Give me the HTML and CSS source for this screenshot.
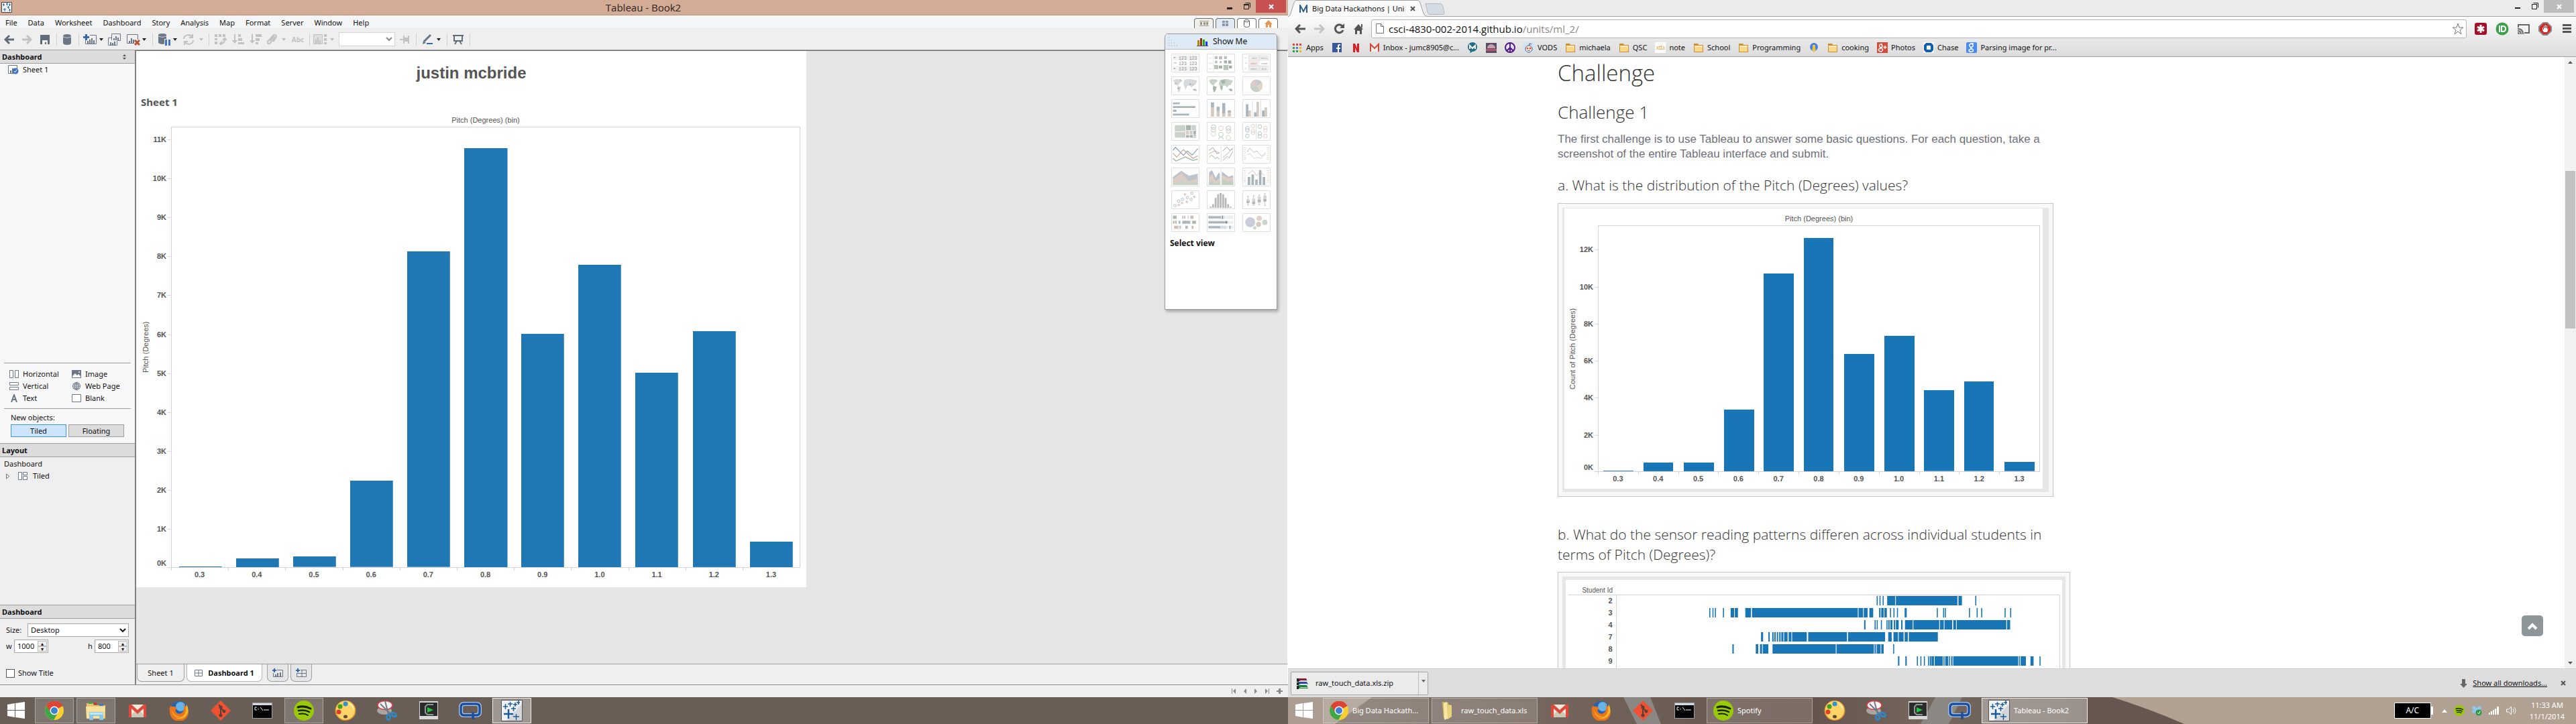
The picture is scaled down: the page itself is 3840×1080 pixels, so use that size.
FILE: index.html
```html
<!DOCTYPE html>
<html lang="en">
<head>
<meta charset="utf-8">
<title>Desktop</title>
<link rel="stylesheet" href="styles.css">
</head>
<body>
<svg class="sprite" aria-hidden="true">
  <symbol id="win" viewBox="0 0 28 28"><path fill="#fff" d="M1 5l11-2v10H1zM13 3l14-2v12H13zM1 14h11v10L1 22zM13 14h14v12l-14-2z"/></symbol>
  <symbol id="chrome" viewBox="0 0 28 28"><circle cx="14" cy="14" r="14" fill="#f7cf31"/><path fill="#dd4433" d="M14 14L2 7a14 14 0 0 1 24.500 0z"/><path fill="#dd4433" d="M14 7h12.100A14 14 0 0 0 1.900 7L8 17z"/><path fill="#3fa648" d="M1.900 7A14 14 0 0 0 13 28l6-10-10-1z"/><circle cx="14" cy="14" r="6.500" fill="#fff"/><circle cx="14" cy="14" r="5" fill="#3d7fd0"/></symbol>
  <symbol id="explorer" viewBox="0 0 32 28"><path fill="#e8c56a" d="M2 3h9l2 3h17v20H2z"/><path fill="#3faa3f" d="M5 1h5v3H5z"/><path fill="#c33" d="M13 2h4v3h-4z"/><path fill="#47c" d="M21 4h6v3h-6z"/><path fill="#f6e29a" d="M1 8h29l-2 18H2z"/><path fill="#8cc6e8" d="M6 16h21v12h-6v-6h-9v6H6z"/><path fill="#c4e6f7" d="M7 17h19v3H7z"/></symbol>
  <symbol id="folder-big" viewBox="0 0 28 28"><path fill="#d9bd5c" d="M6 1l9 1v24l-7-1z"/><path fill="#f7e9a4" d="M8 3l5-2 1 25-5 2z"/><path fill="#e9d27a" d="M14 5l6 1v17l-6 4z"/></symbol>
  <symbol id="gmail" viewBox="0 0 28 28"><path fill="#eee9dc" d="M1 5h26v19H1z"/><path fill="#cfc8b6" d="M1 24l9-9 4 3 4-3 9 9z"/><path fill="#dc4a3d" d="M1 5h4l9 8 9-8h4v19h-4V11l-9 8-9-8v13H1z"/></symbol>
  <symbol id="firefox" viewBox="0 0 30 30"><circle cx="15" cy="15" r="14" fill="#2b62ad"/><circle cx="17" cy="9" r="7" fill="#63b5e6"/><path fill="#e8761c" d="M2 8c2 1 3 1 5 1 3 0 5 2 4 4-2 1-2 3 0 5 3 3 8 2 10-2 3-5 1-8-1-10 6 2 9 7 9 11A14 14 0 0 1 1 17c-1-4 0-7 1-9z"/><path fill="#f8b526" d="M26 6c4 6 3 14-2 18-4 4-10 4-14 2 9 1 15-5 15-12 0-3 0-5 1-8z"/><path fill="#f59b23" d="M4 13c3 8 8 11 15 11-6 4-15 0-15-11z"/></symbol>
  <symbol id="git" viewBox="0 0 32 32"><path fill="#f05133" d="M16 1l15 15-15 15L1 16z"/><g stroke="#5a3f37" stroke-width="2" fill="#5a3f37"><path d="M13 7l3 4v12M16 12l5 5" fill="none"/><circle cx="16" cy="11" r="1.500"/><circle cx="16" cy="23" r="1.500"/><circle cx="21" cy="17" r="1.500"/></g></symbol>
  <symbol id="cmd" viewBox="0 0 30 24"><path fill="#9aa0a8" d="M0 0h30v24H0z"/><path fill="#d4dae2" d="M1 1h28v3H1z"/><path fill="#050505" d="M1 4h28v19H1z"/><path stroke="#eee" fill="none" d="M7 7H4v4h3M9 8v1M9 10v1M12 7l4 5M17 11h8"/></symbol>
  <symbol id="spotify" viewBox="0 0 30 30"><circle cx="15" cy="15" r="15" fill="#9aca05"/><g fill="none" stroke="#17200a" stroke-linecap="round"><path stroke-width="3" d="M6 10c6-2 13-1 19 2"/><path stroke-width="2.500" d="M7 15c6-1 11-1 16 2"/><path stroke-width="2" d="M8 20c5-1 9-1 13 2"/></g></symbol>
  <symbol id="paint" viewBox="0 0 32 32"><ellipse cx="16" cy="16" rx="15.500" ry="15" fill="#e8952a"/><ellipse cx="16" cy="15.500" rx="14" ry="14" fill="#fcd468"/><circle cx="16" cy="6" r="3.500" fill="#2f94cc"/><circle cx="8" cy="10" r="3.500" fill="#3ea31f"/><circle cx="6" cy="18" r="3.500" fill="#e03c2a"/><ellipse cx="16" cy="25" rx="3" ry="2.500" fill="#5d4a3a"/><path fill="#fff0b5" d="M20 4c6 2 9 7 9 12-3-6-6-8-9-12z"/></symbol>
  <symbol id="snip" viewBox="0 0 32 32"><ellipse cx="12" cy="16" rx="11" ry="6" fill="#a9a5a3"/><ellipse cx="13" cy="8" rx="11" ry="6.500" fill="#f4f2f3" stroke="#dc3a44" stroke-width="1.500"/><path stroke="#707880" stroke-width="2" d="M6 6l15 15M13 2l5 19"/><g fill="none" stroke="#2a8cd0" stroke-width="2.500"><ellipse cx="18" cy="26" rx="2.500" ry="4"/><ellipse cx="26" cy="22" rx="4" ry="2.500" transform="rotate(35 26 22)"/></g></symbol>
  <symbol id="ecad" viewBox="0 0 30 28"><path fill="#d8d8d8" d="M1 0h28v27H1z"/><path fill="#2a2c2c" d="M2 2h26v20H2z"/><path fill="none" stroke="#8f9494" stroke-width="2" d="M22 5h-9l-3 3v9l3 3h9"/><path fill="#22c53c" d="M13 9l9 4-9 4z"/></symbol>
  <symbol id="qapp" viewBox="0 0 34 28"><path fill="none" stroke="#a9c6ee" stroke-width="6" d="M8 4h18q5 0 5 5v7q0 5-5 5H8q-5 0-5-5V9q0-5 5-5z"/><path fill="none" stroke="#1d4f9f" stroke-width="3.500" d="M8 4h18q5 0 5 5v7q0 5-5 5H8q-5 0-5-5V9q0-5 5-5zM21 16v11"/></symbol>
  <symbol id="tableau" viewBox="0 0 32 32"><path fill="#eef0f1" stroke="#555" d="M.5.5h31v31H.5z"/><path fill="#d4d7d9" d="M31 6v25H8z"/><g stroke="#1b5c98" stroke-width="1.500"><path d="M3 10h7M6.500 6v8M10 6h7M13.500 3v7M18 7h6M21 4v6M23 4h5M26 1v6M15 13h7M18.500 10v7M18 25h9M22.500 21v9"/><path stroke-width="2.500" d="M4 21h14M11 14v14"/></g></symbol>
  <symbol id="folder" viewBox="0 0 16 16"><path fill="#c98f33" d="M1 2h6l1 2h7v11H1z"/><path fill="#fbd98c" d="M2 5h12v9H2z"/><path fill="#fdeab9" d="M2 5h12v2H2z"/></symbol>
  <symbol id="cyl" viewBox="0 0 12 16"><path fill="#6b7787" d="M0 3q0-3 6-3t6 3v10q0 3-6 3t-6-3z"/><path fill="none" stroke="#c6ccd4" d="M0 4q6 3 12 0"/></symbol>
</svg>
<div class="desktop">

<!-- Left monitor: Tableau -->
<section class="monitor">
  <header class="titlebar">
    <svg class="app-icon" viewBox="0 0 16 16"><path fill="#f4f7f8" stroke="#444" d="M.5.5h15v15H.5z"/><path stroke="#2267b5" d="M2 4h3M3.500 2v4M7 3h3M8.500 1v4M11 4h3M12.500 2v4M3 11h4M5 9v5M9 8h3M10.500 6v4M11 12h3M12.500 10v4"/></svg>
    <h1 class="title">Tableau - Book2</h1>
    <div class="winbtns">
      <button aria-label="Minimize"><svg width="8" height="16"><path fill="#222" d="M0 11h8v3H0z"/></svg></button>
      <button aria-label="Restore"><svg width="10" height="16"><path fill="none" stroke="#222" d="M.5 6.500h7v7h-7zM2.500 4.500h7v7"/><path fill="#222" d="M0 6h8v2H0z"/></svg></button>
      <button class="close close-red" aria-label="Close"><svg width="8" height="8"><path stroke="#fff" stroke-width="2" d="M1 1l6 6M7 1L1 7"/></svg></button>
    </div>
  </header>
  <nav class="menubar">
    <ul class="menu"><li>File</li><li>Data</li><li>Worksheet</li><li>Dashboard</li><li>Story</li><li>Analysis</li><li>Map</li><li>Format</li><li>Server</li><li>Window</li><li>Help</li></ul>
    <div class="viewtabs">
      <button class="vt vt-beige" aria-label="Filmstrip"><svg width="14" height="8"><path fill="#99927c" d="M0 0h14v1H0zM0 7h14v1H0zM1 2h3v4H1zM6 2h3v4H6zM10 2h3v4h-3z"/></svg></button>
      <button class="vt vt-blue" aria-label="Sheets"><svg width="9" height="8"><path fill="#8797ad" d="M0 0h4v3H0zM5 0h4v3H5zM0 4h4v4H0zM5 4h4v4H5z"/></svg></button>
      <button class="vt" aria-label="Data"><svg width="10" height="12"><path fill="none" stroke="#555" d="M.5 2.500q0-2 4-2t4 2v7q0 2-4 2t-4-2zq4 3 8 0"/></svg></button>
      <button class="vt" aria-label="Home"><svg width="12" height="11"><path fill="#e8964f" d="M6 0l6 6h-2v5H7V7H5v4H2V6H0z"/></svg></button>
    </div>
  </nav>
  <div class="toolbar">
    <button aria-label="Back"><svg width="16" height="16"><path fill="none" stroke="#5f6b79" stroke-width="3" d="M15 8H3M8 2L2 8l6 6"/></svg></button>
    <button aria-label="Forward"><svg width="16" height="16"><path fill="none" stroke="#c2c2c2" stroke-width="3" d="M1 8h12M8 2l6 6-6 6"/></svg></button>
    <button aria-label="Save"><svg width="14" height="14"><path fill="#5f6b79" d="M0 0h14v14H0z"/><path fill="#efefef" d="M3 8h8v6H9v-3H7v3H3z"/></svg></button>
    <i class="sep"></i>
    <button aria-label="Connect"><svg width="12" height="16"><use href="#cyl"/></svg></button>
    <i class="sep"></i>
    <button aria-label="New sheet"><svg width="20" height="16"><path fill="none" stroke="#6b7787" d="M10 1.500h9.500v13H3.500V9"/><path stroke="#6b7787" stroke-width="2" d="M7 14v-4M10 14V8M13 14V6M16 14V9"/><path stroke="#3668b0" stroke-width="3" d="M0 4.500h9M4.500 0v9"/></svg></button>
    <b class="caret"></b>
    <button aria-label="Duplicate"><svg width="20" height="18"><path fill="none" stroke="#6b7787" d="M5.500 10V.5h13v10H14M5 6.500H.5v11h13V11"/><path stroke="#6b7787" stroke-width="2" d="M9 10V7M12 10V4M15 10V6M4 17v-4M7 17v-3M10 17v-5"/></svg></button>
    <button aria-label="Clear"><svg width="20" height="18"><path fill="none" stroke="#6b7787" d="M11 14.500H.5v-13h16V9"/><path stroke="#6b7787" stroke-width="2" d="M4 14v-3M7 14V7M10 14V9"/><path stroke="#b95335" stroke-width="3" d="M12 10l7 7M19 10l-7 7"/></svg></button>
    <b class="caret"></b>
    <i class="sep"></i>
    <button aria-label="Pause updates"><svg width="18" height="18"><path fill="#6b7787" d="M0 2q0-2 6-2t6 2v12q-3 2-6 2t-6-2z"/><path stroke="#c6ccd4" fill="none" d="M0 4q6 3 12 0"/><path fill="#efefef" d="M9 8h9v10H9z"/><path fill="#3f74c4" d="M10 9h3v9h-3zM15 9h3v9h-3z"/></svg></button>
    <b class="caret"></b>
    <button aria-label="Refresh"><svg width="16" height="16"><path fill="none" stroke="#c2c2c2" stroke-width="2" d="M1 7a6.500 6 0 0 1 12-3M15 9a6.500 6 0 0 1-12 3M14 0v5H9M2 16v-5h5"/></svg></button>
    <b class="caret off"></b>
    <i class="sep"></i>
    <button aria-label="Swap"><svg width="18" height="16"><path fill="#c2c2c2" d="M0 0h4v4H0zM6 0h4v4H6zM12 0h4v4h-4zM0 6h4v3H0zM0 11h4v4H0z"/><path fill="none" stroke="#c2c2c2" stroke-width="2" d="M9 14q6 0 6-7M12 9l3-3 3 3M11 11l-3 3 3 3"/></svg></button>
    <button aria-label="Sort ascending"><svg width="18" height="16"><path fill="#c2c2c2" d="M9 0h4v4H9zM9 6h6v4H9zM9 12h9v3H9zM3 0h2v9h3l-4 5-4-5h3z"/></svg></button>
    <button aria-label="Sort descending"><svg width="18" height="16"><path fill="#c2c2c2" d="M9 0h9v4H9zM9 6h6v4H9zM9 12h4v3H9zM3 0h2v9h3l-4 5-4-5h3z"/></svg></button>
    <button aria-label="Group"><svg width="16" height="16"><path fill="none" stroke="#c2c2c2" stroke-width="2" d="M5 10l6-6q2 0 1 2l-7 8q-4 1-3-3l7-8q4-4 6 0 0 2-5 8"/></svg></button>
    <b class="caret off"></b>
    <button class="abc">Abc</button>
    <i class="sep"></i>
    <button aria-label="Fit"><svg width="20" height="16"><path fill="#dedede" stroke="#c2c2c2" d="M.5.5h13v14H.5z"/><path fill="#c2c2c2" d="M3 8h2v7H3zM6 5h2v10H6zM9 9h2v6H9zM16 0h4v4h-4zM16 6h4v4h-4zM16 12h4v3h-4z"/></svg></button>
    <b class="caret off"></b>
    <select class="fit" aria-label="View size"><option></option></select>
    <button aria-label="Fix axes"><svg width="16" height="12"><path fill="#c2c2c2" d="M0 5h5v2H0zM5 0h2v12H5zM7 3h5V0h2v12h-2V9H7z"/></svg></button>
    <i class="sep"></i>
    <button aria-label="Highlight"><svg width="16" height="16"><path stroke="#6b7787" stroke-width="3" d="M2 11L12 1"/><path fill="#6b7787" d="M0 15l1-5 4 3z"/><path fill="#3668b0" d="M6 13h9v2H6z"/></svg></button>
    <b class="caret"></b>
    <i class="sep"></i>
    <button aria-label="Presentation"><svg width="16" height="16"><path fill="none" stroke="#5f6b79" stroke-width="2" d="M0 2h16M2 2v8h12V2M6 10l-3 5M10 10l3 5"/></svg></button>
    <i class="sep"></i>
  </div>

  <div class="workspace">
    <aside class="sidebar">
      <h2 class="side-head side-first">Dashboard <svg width="5" height="8"><path fill="#555" d="M0 3l2.500-3L5 3zM0 5h5L2.500 8z"/></svg></h2>
      <div class="sheet-list"><div class="sheet-item"><svg width="16" height="14"><path fill="#fff" stroke="#6b7787" d="M.5.5h13v12H.5z"/><path fill="#6b7787" d="M3 8h2v4H3zM6 5h2v7H6z"/><circle cx="11" cy="9" r="4.500" fill="#3f74c4"/><path fill="none" stroke="#fff" d="M9 9l1.500 2 2.500-4"/></svg>Sheet 1</div></div>
      <div class="objects">
        <ul class="object-grid">
          <li><svg width="14" height="12"><path fill="#fff" stroke="#6b7787" d="M.5.5h5v11h-5zM8.500.5h5v11h-5z"/></svg>Horizontal</li>
          <li><svg width="14" height="12"><path fill="#6b7787" d="M0 0h14v12H0z"/><path fill="#fff" d="M1 9l4-4 3 3 2-2 3 3v2H1z"/><circle cx="11" cy="3" r="1" fill="#fff"/></svg>Image</li>
          <li><svg width="14" height="12"><path fill="#fff" stroke="#6b7787" d="M.5.5h13v4H.5zM.5 7.500h13v4H.5z"/></svg>Vertical</li>
          <li><svg width="14" height="12"><path fill="none" stroke="#6b7787" d="M7 .5a5.500 5.500 0 1 1 0 11 5.500 5.500 0 1 1 0-11zM7 0v12M1 6h12M2 3h10M2 9h10M7 .5q-6 5.500 0 11M7 .5q6 5.500 0 11"/></svg>Web Page</li>
          <li><svg width="14" height="12"><path fill="none" stroke="#6b7787" stroke-width="2" d="M3 12L7 1l4 11M4 8h6"/></svg>Text</li>
          <li><svg width="14" height="12"><path fill="#fff" stroke="#6b7787" d="M.5.5h13v11H.5z"/></svg>Blank</li>
        </ul>
        <p class="newobj">New objects:</p>
        <div class="toggle"><button class="on">Tiled</button><button>Floating</button></div>
      </div>
      <h2 class="side-head">Layout</h2>
      <div class="layout-tree">
        <div>Dashboard</div>
        <div class="tree-row"><svg width="6" height="9"><path fill="none" stroke="#777" d="M.5 1v7L5 4.500z"/></svg><svg width="14" height="12"><path fill="#fff" stroke="#6b7787" d="M.5.5h5v11h-5zM7.500.5h6v4h-6zM7.500 6.500h6v5h-6z"/></svg>Tiled</div>
      </div>
      <h2 class="side-head">Dashboard</h2>
      <form class="size-form">
        <div class="size-row"><label for="size">Size:</label><select id="size"><option>Desktop</option></select></div>
        <div class="size-row dims">
          <label for="w">w</label><span class="spin"><input id="w" value="1000"><span class="steps"><button type="button" aria-label="Wider">▴</button><button type="button" aria-label="Narrower">▾</button></span></span>
          <label class="h" for="h">h</label><span class="spin"><input id="h" value="800"><span class="steps"><button type="button" aria-label="Taller">▴</button><button type="button" aria-label="Shorter">▾</button></span></span>
        </div>
        <label class="check"><input type="checkbox"> Show Title</label>
      </form>
    </aside>

    <div class="main">
      <div class="canvas">
        <article class="dash">
          <h2 class="dash-title">justin mcbride</h2>
          <h3 class="sheet-title">Sheet 1</h3>
          <figure class="chart chart-left">
            <figcaption>Pitch (Degrees) (bin)</figcaption>
            <span class="ytitle">Pitch (Degrees)</span>
            <ol class="yaxis">
              <li style="--v:11000">11K</li><li style="--v:10000">10K</li><li style="--v:9000">9K</li><li style="--v:8000">8K</li><li style="--v:7000">7K</li><li style="--v:6000">6K</li><li style="--v:5000">5K</li><li style="--v:4000">4K</li><li style="--v:3000">3K</li><li style="--v:2000">2K</li><li style="--v:1000">1K</li><li class="zero" style="--v:0">0K</li>
            </ol>
            <div class="plot"><i style="--v:20"></i><i style="--v:225"></i><i style="--v:270"></i><i style="--v:2223"></i><i style="--v:8130"></i><i style="--v:10800"></i><i style="--v:6015"></i><i style="--v:7795"></i><i style="--v:5015"></i><i style="--v:6078"></i><i style="--v:660"></i></div>
            <ol class="xaxis"><li>0.3</li><li>0.4</li><li>0.5</li><li>0.6</li><li>0.7</li><li>0.8</li><li>0.9</li><li>1.0</li><li>1.1</li><li>1.2</li><li>1.3</li></ol>
          </figure>
        </article>
      </div>
      <div class="sheet-tabs">
        <button class="st st-sheet">Sheet 1</button>
        <button class="st st-active"><svg width="12" height="10"><path fill="#fff" stroke="#6b7787" d="M.5.5h11v9H.5zM6 0v10M0 5h12"/></svg>Dashboard 1</button>
        <button class="st st-add" aria-label="New worksheet"><svg width="16" height="13"><path fill="none" stroke="#6b7787" d="M7 2.500h8.500v10H1.500V7"/><path stroke="#6b7787" stroke-width="2" d="M5 12V9M8 12V7M12 12V6"/><path stroke="#3668b0" stroke-width="2" d="M0 3h6M3 0v6"/></svg></button>
        <button class="st st-add" aria-label="New dashboard"><svg width="16" height="13"><path fill="none" stroke="#6b7787" d="M7 2.500h8.500v10H1.500V7M9 2v10M1 7.500h15"/><path stroke="#3668b0" stroke-width="2" d="M0 3h6M3 0v6"/></svg></button>
      </div>
    </div>

    <section class="showme">
      <h2 class="showme-head"><svg class="grip" width="15" height="14"><path stroke="#999" stroke-dasharray="1 3" d="M1 1h1M1 5h5M1 9h9M1 13h14"/></svg><svg width="17" height="13"><path fill="#b8860b" d="M1 4h3v8H1z"/><path fill="#9c2b0c" d="M5 1h3v11H5z"/><path fill="#1fae1f" d="M9 3h3v9H9z"/><path fill="#2233ff" d="M13 6h3v6h-3z"/><path fill="#555" d="M0 12h17v1H0z"/></svg>Show Me</h2>
      <div class="thumbs">
        <svg viewBox="0 0 126 84"><path fill="#f3f3f3" d="M3 3h120v27H3zM3 56h120v25H3z"/><path fill="#aaa" d="M6 13h9v5H6zM6 40h15v4H6zM6 66h9v5H6z"/><g class="mono"><text x="31" y="25">123 123</text><text x="31" y="51">123 123</text><text x="31" y="77">123 123</text></g></svg>
        <svg viewBox="0 0 126 84"><path fill="#ddd" d="M6 15h9v5H6zM6 41h15v4H6zM6 67h9v5H6zM24 3h2v78h-2z"/><path fill="#b7c2ba" d="M33 9h14v14H33zM78 9h14v14H78zM34 31h12v12H34zM57 33h10v10H57zM30 52h20v20H30zM75 52h24v24H75z"/><path fill="#a4aca7" d="M78 30h14v14H78zM102 54h14v14h-14zM54 54h15v15H54zM98 30h15v15H98z"/><path fill="#c9b5b8" d="M54 9h15v15H54z"/></svg>
        <svg viewBox="0 0 126 84"><path fill="#ededed" d="M26 3h97v26H26zM26 56h97v25H26z"/><path fill="#f7e6e6" d="M26 30h48v26H26z"/><path fill="#d9d9d9" d="M24 3h2v78h-2zM76 3h2v78h-2zM24 28h100v2H24zM24 55h100v2H24zM6 15h9v5H6zM6 41h12v4H6zM6 67h9v5H6z"/><g class="mono small"><text x="41" y="21">172</text><text x="84" y="21">1272</text><text x="33" y="48">1347</text><text x="84" y="48">1160</text><text x="33" y="74">2082</text><text x="88" y="74">021</text></g></svg>
        <svg viewBox="0 0 126 84"><path fill="#d8d9da" d="M5 15l15-5 20 1 9 8-12 8-10 15-15-12zM26 42l17 5-7 22-8 4-4-18zM53 34l6-20 25-5 37 7-10 20-12 4-5 10-10-10-12 2-8 20-6-18z"/><path fill="#ccc" d="M98 58l14-3 8 8-8 7z"/><path fill="#aab4bf" d="M12 28h8v7h-8zM26 50h9v8h-9zM36 12h7v6h-7zM82 30h9v8h-9zM102 58h8v7h-8zM98 34h6v6h-6z"/></svg>
        <svg viewBox="0 0 126 84"><path fill="#c7d1c8" d="M5 15l15-5 20 1 9 8-12 8-10 15-15-12zM53 34l6-20 25-5 37 7-10 20-12 4-5 10-10-10-12 2-8 20-6-18z"/><path fill="#a6b5a9" d="M26 42l17 5-7 22-8 4-4-18zM62 18l20-6 2 16-14 6zM60 42l12 2-4 22-6-8zM98 58l14-3 8 8-8 7z"/></svg>
        <svg viewBox="0 0 126 84"><circle cx="63" cy="42" r="30" fill="#e2d4c8"/><path fill="#c6cad3" d="M63 42V12a30 30 0 0 1 26 15z"/><path fill="#dccbcd" d="M63 42V12a30 30 0 0 0-29 34z"/><path fill="#c6d2c7" d="M63 42l-29 4a30 30 0 0 0 47 20z"/></svg>
        <svg viewBox="0 0 126 84"><path fill="#a9b4bc" d="M3 12h33v9H3zM3 30h108v9H3zM3 48h18v9H3zM3 66h78v9H3z"/></svg>
        <svg viewBox="0 0 126 84"><path fill="#a9b4bc" d="M15 12h15v26H15zM42 33h15v20H42zM69 15h15v52H69zM96 51h15v10H96z"/><path fill="#d6c9bf" d="M15 36h15v45H15zM42 51h15v30H42zM69 66h15v15H69zM96 60h15v21H96z"/></svg>
        <svg viewBox="0 0 126 84"><path fill="#ddd" d="M42 3h3v78h-3zM82 3h3v78h-3z"/><path fill="#a9b4bc" d="M12 21h12v60H12zM51 60h12v21H51zM90 51h12v30H90z"/><path fill="#d6c9bf" d="M24 51h12v30H24zM63 9h12v72H63zM102 36h12v45h-12z"/></svg>
        <svg viewBox="0 0 126 84"><path fill="#cad2cb" d="M12 12h51v30H12zM12 45h51v27H12zM93 12h21v24H93zM84 39h15v18H84z"/><path fill="#a9b1ac" d="M66 12h24v24H66zM102 39h12v18h-12zM66 60h15v12H66zM84 60h15v12H84zM102 60h12v5h-12zM102 68h12v4h-12z"/><path fill="#dccdc4" d="M66 39h15v18H66z"/></svg>
        <svg viewBox="0 0 126 84"><g fill="none" stroke-width="3"><path stroke="#b8c1c9" d="M38 21a11 11 0 1 1-22 0 11 11 0 1 1 22 0zM110 27a11 11 0 1 1-22 0 11 11 0 1 1 22 0zM52 81a11 11 0 0 1 22 0"/><path stroke="#bccabd" d="M38 34a11 11 0 1 1-22 0 11 11 0 1 1 22 0zM74 57a11 11 0 1 1-22 0 11 11 0 1 1 22 0zM110 40a11 11 0 1 1-22 0 11 11 0 1 1 22 0z"/><path stroke="#dfcfc5" d="M38 54a11 11 0 1 1-22 0 11 11 0 1 1 22 0zM74 27a11 11 0 1 1-22 0 11 11 0 1 1 22 0zM110 72a11 11 0 1 1-22 0 11 11 0 1 1 22 0z"/></g></svg>
        <svg viewBox="0 0 126 84"><path fill="#ddd" d="M60 3h3v78h-3z"/><g fill="none" stroke-width="3"><path stroke="#b8c1c9" d="M28 27a9 9 0 1 1-18 0 9 9 0 1 1 18 0zM28 36a9 9 0 1 1-18 0 9 9 0 1 1 18 0zM28 64a9 9 0 1 1-18 0 9 9 0 1 1 18 0zM88 19a9 9 0 1 1-18 0 9 9 0 1 1 18 0zM88 52a9 9 0 1 1-18 0 9 9 0 1 1 18 0zM88 66a9 9 0 1 1-18 0 9 9 0 1 1 18 0z"/><path stroke="#dfcfc5" d="M55 16a9 9 0 1 1-18 0 9 9 0 1 1 18 0zM55 40a9 9 0 1 1-18 0 9 9 0 1 1 18 0zM55 49a9 9 0 1 1-18 0 9 9 0 1 1 18 0zM115 25a9 9 0 1 1-18 0 9 9 0 1 1 18 0zM115 37a9 9 0 1 1-18 0 9 9 0 1 1 18 0zM115 64a9 9 0 1 1-18 0 9 9 0 1 1 18 0z"/></g></svg>
        <svg viewBox="0 0 126 84"><g fill="none" stroke-width="4"><path stroke="#8fa0af" d="M3 24L15 9l39 39 18-22 24 20 27-30"/><path stroke="#c8ac99" d="M3 36l18 20 33-36 45 42 24-12"/><path stroke="#98b39c" d="M3 62l15 13 45-20 36 17 24-6"/></g></svg>
        <svg viewBox="0 0 126 84"><path fill="#ddd" d="M62 3h3v78h-3z"/><g fill="none" stroke-width="3"><path stroke="#8fa0af" d="M6 24L24 10l20 30 12-6M72 26l20-18 14 16 15-8"/><path stroke="#c8ac99" d="M6 40l30-15 20 12M74 58l24-22 22-24"/><path stroke="#98b39c" d="M6 58l12-12 20 18 6-8 12 10M72 72l22-20 8 8 18-30"/></g></svg>
        <svg viewBox="0 0 126 84"><path fill="none" stroke="#ccbca8" stroke-width="9" stroke-dasharray="2 7" d="M7 10v62M118 10v62"/><g fill="none" stroke-width="3"><path stroke="#b3bfca" d="M18 32l12-20 20 22 14-8 24 26 18-18"/><path stroke="#dccbc0" d="M18 45l15-6 18 24 14-6 20 5 22-20"/></g></svg>
        <svg viewBox="0 0 126 84"><path fill="#bdc4cc" d="M3 42l40-30 38 24 42-10v54H3z"/><path fill="#dccec5" d="M3 54l40-30 38 38 42-14v32H3z"/><path fill="#c8d2c9" d="M3 75l40-18 38 15 42-10v19H3z"/></svg>
        <svg viewBox="0 0 126 84"><path fill="#b7c0c8" d="M6 20L20 9l18 38 15-27 5 8v52H6zM68 15l32 26 22-8v47H68z"/><path fill="#dccec5" d="M6 45l14-18 18 35 20-15v33H6zM68 34l32 12 22-2v36H68z"/><path fill="#c3cec4" d="M6 70l14-10 18 15 20-15v20H6zM68 52l32 16 22-10v22H68z"/><path fill="#ddd" d="M62 3h3v78h-3z"/></svg>
        <svg viewBox="0 0 126 84"><path fill="none" stroke="#ccbca8" stroke-width="9" stroke-dasharray="2 7" d="M7 10v62M118 10v62"/><path fill="#a9b4bc" d="M21 42h12v39H21zM39 30h12v51H39zM57 54h12v27H57zM75 9h12v72H75zM93 42h12v39H93z"/><path fill="none" stroke="#d2bdb0" stroke-width="3" d="M24 27l20-17 20 26 18-18 20 18"/></svg>
        <svg viewBox="0 0 126 84"><g fill="none" stroke="#aab8c3" stroke-width="3"><circle cx="13" cy="70" r="6"/><circle cx="31" cy="49" r="6"/><circle cx="49" cy="40" r="6"/><circle cx="73" cy="31" r="6"/><circle cx="91" cy="40" r="6"/><circle cx="94" cy="10" r="6"/></g><path stroke="#d2b9aa" stroke-width="3" d="M24 67h14M31 60v14M40 58h14M47 51v14M54 16h14M61 9v14M63 52h14M70 45v14M99 28h14M106 21v14"/></svg>
        <svg viewBox="0 0 126 84"><path fill="#b8b8b8" d="M9 75h9v6H9zM21 63h9v18h-9zM33 33h9v48h-9zM45 15h9v66h-9zM57 9h9v72h-9zM69 15h9v66h-9zM81 33h9v48h-9zM93 63h9v18h-9zM105 75h9v6h-9z"/></svg>
        <svg viewBox="0 0 126 84"><path stroke="#aaa" stroke-width="2" d="M22 24v44M49 21v48M76 18v48M103 12v56M18 25h9M45 22h9M72 19h9M99 13h9M18 68h9M45 69h9M72 66h9M99 69h9"/><path fill="#d6d6d6" d="M15 39h15v9H15zM42 36h15v15H42zM69 27h15v15H69zM96 21h15v18H96z"/><path fill="#b5b5b5" d="M15 48h15v9H15zM42 51h15v12H42zM69 42h15v12H69zM96 39h15v12H96z"/></svg>
        <svg viewBox="0 0 126 84"><path fill="#aeb6bf" d="M3 9h18v15H3zM30 33h9v15h-9zM48 33h39v15H48zM63 57h12v15H63zM75 9h3v15h-3z"/><path fill="#cdbdb3" d="M48 9h6v15h-6zM87 9h15v15H87zM3 33h9v15H3zM9 57h18v15H9zM93 57h9v15h-9zM57 9h6v15h-6zM36 57h6v15h-6z"/><path fill="#a9b9ab" d="M96 33h18v15H96zM15 33h6v15h-6zM30 57h3v15h-3z"/></svg>
        <svg viewBox="0 0 126 84"><path fill="#edf0f2" d="M3 9h120v15H3zM3 33h120v15H3zM3 57h120v15H3z"/><path fill="#d8dfe4" d="M3 9h78v15H3zM3 33h70v15H3zM3 57h86v15H3z"/><path fill="#a9b4bc" d="M3 12h60v9H3zM3 36h93v9H3zM3 60h57v9H3z"/><path fill="#666" d="M69 9h3v15h-3zM87 33h3v15h-3zM105 57h3v15h-3z"/></svg>
        <svg viewBox="0 0 126 84"><circle cx="33" cy="40" r="24" fill="#c9cdd7"/><circle cx="76" cy="22" r="13" fill="#e0d3c9"/><circle cx="103" cy="41" r="13" fill="#ccd6cd"/><circle cx="73" cy="51" r="12" fill="#d6c8be"/><circle cx="55" cy="68" r="8" fill="#ccd6cd"/></svg>
      </div>
      <p class="select-view">Select view</p>
    </section>
  </div>
  <footer class="status"><svg width="76" height="8"><path fill="#888" d="M0 0h1v8H0zM6 0v8L2 4zM22 0v8l-4-4zM34 0v8l4-4zM50 0v8l4-4zM55 0h1v8h-1zM70 0h3v3h3v2h-3v3h-3V5h-3V3h3z"/></svg></footer>

  <nav class="taskbar taskbar-left">
    <button class="start" aria-label="Start"><svg width="28" height="28"><use href="#win"/></svg></button>
    <button class="tk open" aria-label="Chrome"><svg width="28" height="28"><use href="#chrome"/></svg></button>
    <button class="tk open" aria-label="Explorer"><svg width="32" height="28"><use href="#explorer"/></svg></button>
    <button class="tk" aria-label="Gmail"><svg width="28" height="28"><use href="#gmail"/></svg></button>
    <button class="tk" aria-label="Firefox"><svg width="30" height="30"><use href="#firefox"/></svg></button>
    <button class="tk" aria-label="Git"><svg width="32" height="32"><use href="#git"/></svg></button>
    <button class="tk" aria-label="Command prompt"><svg width="30" height="24"><use href="#cmd"/></svg></button>
    <button class="tk open" aria-label="Spotify"><svg width="30" height="30"><use href="#spotify"/></svg></button>
    <button class="tk" aria-label="Paint"><svg width="32" height="32"><use href="#paint"/></svg></button>
    <button class="tk" aria-label="Snipping tool"><svg width="32" height="32"><use href="#snip"/></svg></button>
    <button class="tk" aria-label="Emulator"><svg width="30" height="28"><use href="#ecad"/></svg></button>
    <button class="tk" aria-label="Q"><svg width="34" height="28"><use href="#qapp"/></svg></button>
    <button class="tk current" aria-label="Tableau"><svg width="32" height="32"><use href="#tableau"/></svg></button>
  </nav>
</section>

<!-- Right monitor: Chrome -->
<section class="monitor">
  <header class="tabstrip">
    <svg class="newtab" width="30" height="17"><path fill="#d5dbe3" stroke="#b4b9c0" d="M1 .5h22q3 0 4 4l2 10q0 2-2 2H7q-2 0-3-3z"/></svg>
    <svg class="tabshape" width="212" height="25"><path fill="#fafafa" stroke="#a0a0a0" d="M0 25q3-1 4-5L9 4q1-3.500 4-3.500h180q3 0 4 3.500l5 16q2 4 5 4.500"/></svg>
    <div class="tab"><svg width="13" height="12"><path fill="none" stroke="#2a5d91" stroke-width="2" d="M1 12V1l5 9 5-9v11"/></svg><span class="tabname">Big Data Hackathons | Uni</span><button aria-label="Close tab"><svg width="8" height="8"><path stroke="#555" stroke-width="2" d="M1 1l6 6M7 1L1 7"/></svg></button></div>
    <div class="winbtns">
      <button aria-label="Minimize"><svg width="8" height="16"><path fill="#222" d="M0 11h8v2H0z"/></svg></button>
      <button aria-label="Restore"><svg width="10" height="16"><path fill="none" stroke="#222" d="M.5 6.500h7v7h-7zM2.500 4.500h7v7"/><path fill="#222" d="M0 6h8v1H0z"/></svg></button>
      <button class="close" aria-label="Close"><svg width="8" height="8"><path stroke="#fff" stroke-width="2" d="M1 1l6 6M7 1L1 7"/></svg></button>
    </div>
  </header>
  <div class="chrome-ui">
    <div class="navrow">
      <button class="nb" aria-label="Back"><svg width="16" height="14"><path fill="none" stroke="#555" stroke-width="3" d="M16 7H3M8 1L2 7l6 6"/></svg></button>
      <button class="nb" aria-label="Forward"><svg width="16" height="14"><path fill="none" stroke="#c4c4c4" stroke-width="3" d="M0 7h13M8 1l6 6-6 6"/></svg></button>
      <button class="nb" aria-label="Reload"><svg width="16" height="16"><path fill="none" stroke="#555" stroke-width="3" d="M13 4a6 6 0 1 0 1 6"/><path fill="#555" d="M9 7h7V0z"/></svg></button>
      <button class="nb" aria-label="Home"><svg width="16" height="16"><path fill="#555" d="M8 1l7 8h-2v7h-3v-5H6v5H3V9H1zM12 1h2v5h-2z"/></svg></button>
      <div class="omni"><svg width="12" height="15"><path fill="#fff" stroke="#777" d="M.5.5h7l4 4v10H.5zM7.500.5v4h4"/></svg><a href="#top" class="url">csci-4830-002-2014.github.io<span>/units/ml_2/</span></a><svg class="star" width="18" height="18"><path fill="none" stroke="#777" d="M9 1l2 6h6l-5 4 2 6-5-4-5 4 2-6-5-4h6z"/></svg></div>
      <div class="ext">
        <svg width="20" height="20"><rect width="18" height="18" x="1" y="1" rx="3" fill="#a50f28"/><path stroke="#fff" stroke-width="3" d="M10 4v12M5 7l10 6M15 7L5 13"/></svg>
        <svg width="20" height="20"><circle cx="10" cy="10" r="9.500" fill="#3ba04a"/><path fill="none" stroke="#fff" stroke-width="2" d="M6 5v10M9 6h2q4 0 4 4t-4 4H9z"/></svg>
        <svg width="20" height="18"><path fill="none" stroke="#666" stroke-width="2" d="M2 7V3h16v12h-7"/><path fill="none" stroke="#666" stroke-width="2" d="M1 15q2 0 2 2M1 12q5 0 5 5M1 9q8 0 8 8"/></svg>
        <svg width="20" height="20"><path fill="#d22" stroke="#888" stroke-width="2" d="M7 1h6l6 6v6l-6 6H7l-6-6V7z"/><path fill="#fff" d="M6 8h1v3h1V5h1v4h1V4h1v5h1V5h1v6l2-2-2 6H8l-2-3z"/></svg>
        <svg width="20" height="14"><path fill="#555" d="M4 0h13v3H4zM4 5h13v3H4zM4 10h13v3H4z"/></svg>
      </div>
    </div>
    <nav class="bookmarks">
      <a href="#apps"><svg width="16" height="16"><path fill="#e0443a" d="M1 2h3v3H1zM6 2h3v3H6zM11 2h3v3h-3z"/><path fill="#2a9d57" d="M1 7h3v3H1zM1 12h3v3H1zM6 12h3v3H6z"/><path fill="#4a7fe0" d="M6 7h3v3H6z"/><path fill="#efb52c" d="M11 7h3v3h-3zM11 12h3v3h-3z"/></svg>Apps</a>
      <a href="#fb" aria-label="Facebook"><svg width="16" height="16"><path fill="#3b5998" d="M1 1h14v14H1z"/><path fill="none" stroke="#fff" stroke-width="2" d="M13 4h-2q-1 0-1 2v9M7 9h6"/></svg></a>
      <a href="#netflix" aria-label="Netflix"><svg width="16" height="16"><path fill="#d81f26" d="M4 2h3l3 7V2h3v13h-3L7 8v7H4z"/></svg></a>
      <a href="#mail"><svg width="16" height="16"><path fill="#f4eee8" d="M1 3h14v11H1z"/><path fill="none" stroke="#d54b3d" stroke-width="2" d="M2 14V3l6 6 6-6v11"/></svg>Inbox - jumc8905@c...</a>
      <a href="#m" aria-label="Forum"><svg width="16" height="16"><circle cx="8" cy="7" r="7" fill="#216e8c"/><path fill="#216e8c" d="M5 12l-1 4 6-3z"/><path fill="none" stroke="#fff" stroke-width="2" d="M4 10V5l4 4 4-4v5"/></svg></a>
      <a href="#star" aria-label="Death star"><svg width="16" height="16"><path fill="#5b4f66" d="M0 1h16v15H0z"/><path fill="#c4a0b4" d="M2 9a6 6 0 0 1 12 0z"/><path fill="#b3566a" d="M0 10h16v3H0z"/></svg></a>
      <a href="#peace" aria-label="Peace"><svg width="16" height="16"><path fill="none" stroke="#551a8b" stroke-width="2" d="M8 1a7 7 0 1 1 0 14A7 7 0 1 1 8 1zM8 1v14M8 8l-5 5M8 8l5 5"/></svg></a>
      <a href="#vods"><svg width="16" height="16"><path fill="#cee3f8" d="M0 0h16v16H0z"/><circle cx="8" cy="10" r="5" fill="#fff" stroke="#555"/><circle cx="6" cy="9" r="1.500" fill="#f04a22"/><circle cx="10" cy="9" r="1.500" fill="#f04a22"/><path stroke="#555" fill="none" d="M8 5l1-3 3 1M6 12q2 1 4 0"/></svg>VODS</a>
      <a href="#michaela"><svg width="16" height="16"><use href="#folder"/></svg>michaela</a>
      <a href="#qsc"><svg width="16" height="16"><use href="#folder"/></svg>QSC</a>
      <a href="#note"><span class="xda">xda</span>note</a>
      <a href="#school"><svg width="16" height="16"><use href="#folder"/></svg>School</a>
      <a href="#prog"><svg width="16" height="16"><use href="#folder"/></svg>Programming</a>
      <a href="#shield" aria-label="Gadget"><svg width="16" height="16"><circle cx="8" cy="7" r="6" fill="#3f7fe0"/><path fill="#f0c23a" d="M6 4h4v5l1 2-3 4-3-4 1-2z"/></svg></a>
      <a href="#cooking"><svg width="16" height="16"><use href="#folder"/></svg>cooking</a>
      <a href="#photos"><svg width="16" height="16"><path fill="#d64a38" d="M0 0h16v16H0z"/><path fill="none" stroke="#fff" stroke-width="1.500" d="M8 3H5q-3 2 0 5 3 0 3-3L6 3M6 8q5 4 0 6-5-1-3-4l3-1M12 5v5M9.500 7.500h5"/></svg>Photos</a>
      <a href="#chase"><svg width="16" height="16"><path fill="#fff" d="M0 0h16v16H0z"/><path fill="none" stroke="#1361ab" stroke-width="4" d="M5 3h6l2 2v6l-2 2H5l-2-2V5z"/></svg>Chase</a>
      <a href="#parse"><svg width="16" height="16"><rect width="16" height="16" rx="2" fill="#4b8bf4"/><path fill="none" stroke="#fff" stroke-width="1.500" d="M11 2H7q-4 2-1 5 5 1 4-3L8 2M7 7q-1 2 2 3 3 2 0 4-5 1-5-2 1-2 4-2"/></svg>Parsing image for pr...</a>
    </nav>
  </div>

  <div class="viewport">
    <main class="page" id="top">
      <div class="content">
        <h1 class="h-one">Challenge</h1>
        <h2 class="h-two">Challenge 1</h2>
        <p class="lead">The first challenge is to use Tableau to answer some basic questions. For each question, take a screenshot of the entire Tableau interface and submit.</p>
        <h3 class="h-three">a. What is the distribution of the Pitch (Degrees) values?</h3>
        <div class="frame frame-a"><div class="shot-a">
          <figure class="chart chart-right">
            <figcaption>Pitch (Degrees) (bin)</figcaption>
            <span class="ytitle">Count of Pitch (Degrees)</span>
            <ol class="yaxis"><li style="--v:12000">12K</li><li style="--v:10000">10K</li><li style="--v:8000">8K</li><li style="--v:6000">6K</li><li style="--v:4000">4K</li><li style="--v:2000">2K</li><li class="zero" style="--v:0">0K</li></ol>
            <div class="plot"><i style="--v:30"></i><i style="--v:470"></i><i style="--v:470"></i><i style="--v:3345"></i><i style="--v:10740"></i><i style="--v:12670"></i><i style="--v:6375"></i><i style="--v:7345"></i><i style="--v:4390"></i><i style="--v:4860"></i><i style="--v:500"></i></div>
            <ol class="xaxis"><li>0.3</li><li>0.4</li><li>0.5</li><li>0.6</li><li>0.7</li><li>0.8</li><li>0.9</li><li>1.0</li><li>1.1</li><li>1.2</li><li>1.3</li></ol>
          </figure>
        </div></div>
        <h3 class="h-three h-b">b. What do the sensor reading patterns differen across individual students in terms of Pitch (Degrees)?</h3>
        <div class="frame frame-b"><div class="shot-b">
          <table class="gantt">
            <thead><tr><th>Student Id</th><td></td></tr></thead>
            <tbody>
            <tr><th>2</th><td><svg viewBox="209 0 1268 14" preserveAspectRatio="none"><path d="M953 7h3M961 7h3M970 7h3M983 7h23M1008 7h176M1187 7h10M1235 7h3"/></svg></td></tr>
            <tr><th>3</th><td><svg viewBox="209 0 1268 14" preserveAspectRatio="none"><path d="M474 7h3M483 7h3M490 7h3M513 7h3M535 7h10M547 7h9M577 7h16M596 7h303M901 7h13M916 7h11M932 7h11M960 7h4M966 7h7M975 7h7M991 7h3M1001 7h3M1011 7h3M1033 7h6M1125 7h3M1143 7h3M1148 7h3M1217 7h3M1239 7h3M1252 7h3M1319 7h3M1335 7h3"/></svg></td></tr>
            <tr><th>4</th><td><svg viewBox="209 0 1268 14" preserveAspectRatio="none"><path d="M917 7h4M947 7h3M953 7h3M965 7h3M981 7h3M986 7h4M992 7h6M1002 7h4M1008 7h8M1023 7h4M1034 7h22M1058 7h74M1134 7h11M1147 7h22M1172 7h8M1182 7h142M1326 7h9"/></svg></td></tr>
            <tr><th>7</th><td><svg viewBox="209 0 1268 14" preserveAspectRatio="none"><path d="M622 7h6M643 7h4M654 7h4M660 7h4M667 7h4M674 7h4M680 7h6M688 7h10M701 7h8M711 7h42M757 7h111M871 7h106M986 7h10M1001 7h13M1016 7h14M1033 7h9M1045 7h83"/></svg></td></tr>
            <tr><th>8</th><td><svg viewBox="209 0 1268 14" preserveAspectRatio="none"><path d="M540 7h4M607 7h7M619 7h6M627 7h16M655 7h181M838 7h107M947 7h4M953 7h11M966 7h7M1000 7h3"/></svg></td></tr>
            <tr><th>9</th><td><svg viewBox="209 0 1268 14" preserveAspectRatio="none"><path d="M1014 7h4M1035 7h4M1068 7h3M1078 7h3M1088 7h3M1100 7h3M1105 7h4M1110 7h7M1119 7h23M1144 7h3M1149 7h9M1160 7h3M1166 7h4M1172 7h186M1360 7h3M1365 7h15M1393 7h9M1419 7h3"/></svg></td></tr>
            <tr><th></th><td></td></tr>
            </tbody>
          </table>
        </div></div>
      </div>
      <a class="totop" href="#top" aria-label="Back to top"><svg width="16" height="12"><path fill="none" stroke="#fff" stroke-width="4" d="M2 10l6-6 6 6"/></svg></a>
    </main>
    <div class="scrollbar"><svg width="7" height="4"><path fill="#555" d="M0 4h7L3.500 0z"/></svg><i></i><svg width="7" height="4"><path fill="#555" d="M0 0h7L3.500 4z"/></svg></div>
  </div>

  <div class="downloads">
    <div class="dl"><button class="dl-file"><svg width="17" height="17"><path fill="#8d1a3c" d="M1 1h13l2 4H3z"/><path fill="#2450a0" d="M2 6h13l2 4H3z"/><path fill="#168038" d="M2 11h13l2 5H3z"/><path fill="#222" d="M0 1h3v5H0zM0 7h3v4H0zM0 12h3v5H0z"/><path fill="#ddd" d="M5 4h11v1H5zM5 9h11v1H5zM5 14h11v1H5z"/></svg>raw_touch_data.xls.zip</button><button class="dl-more" aria-label="Options"><b class="caret off-dark"></b></button></div>
    <div class="dl-right"><svg width="11" height="13"><path fill="#666" d="M3 0h5v7h3l-5.500 6L0 7h3z"/></svg><a href="#downloads">Show all downloads...</a><button aria-label="Close bar"><svg width="8" height="8"><path stroke="#555" stroke-width="2" d="M1 1l6 6M7 1L1 7"/></svg></button></div>
  </div>

  <nav class="taskbar taskbar-right">
    <svg class="wallpaper" viewBox="0 0 1920 40" preserveAspectRatio="none"><path fill="#ab9d91" d="M0 0h125L70 40H0z"/><path fill="#8b8783" d="M500 0h40l16 40h-36zM965 0h40l-20 40h-42z"/><path fill="#b1a193" d="M1229 0h691v40h-584q-50-22-107-40z"/></svg>
    <button class="start" aria-label="Start"><svg width="28" height="28"><use href="#win"/></svg></button>
    <button class="tk wide open"><svg width="28" height="28"><use href="#chrome"/></svg>Big Data Hackath...</button>
    <button class="tk wide open"><svg width="28" height="28"><use href="#folder-big"/></svg>raw_touch_data.xls</button>
    <button class="tk" aria-label="Gmail"><svg width="28" height="28"><use href="#gmail"/></svg></button>
    <button class="tk" aria-label="Firefox"><svg width="30" height="30"><use href="#firefox"/></svg></button>
    <button class="tk" aria-label="Git"><svg width="32" height="32"><use href="#git"/></svg></button>
    <button class="tk" aria-label="Command prompt"><svg width="30" height="24"><use href="#cmd"/></svg></button>
    <button class="tk wide open"><svg width="30" height="30"><use href="#spotify"/></svg>Spotify</button>
    <button class="tk" aria-label="Paint"><svg width="32" height="32"><use href="#paint"/></svg></button>
    <button class="tk" aria-label="Snipping tool"><svg width="32" height="32"><use href="#snip"/></svg></button>
    <button class="tk" aria-label="Emulator"><svg width="30" height="28"><use href="#ecad"/></svg></button>
    <button class="tk" aria-label="Q"><svg width="34" height="28"><use href="#qapp"/></svg></button>
    <button class="tk wide current"><svg width="32" height="32"><use href="#tableau"/></svg>Tableau - Book2</button>
    <div class="tray">
      <span class="ac">A/C</span>
      <svg width="8" height="5"><path fill="#fff" d="M0 5h8L4 0z"/></svg>
      <svg width="16" height="16"><use href="#spotify"/></svg>
      <svg width="16" height="16"><path fill="#8cc8f0" d="M4 1l4 3 4-3 4 3-4 3 4 3-4 2-4-3-4 3-4-2 4-3-4-3z"/><circle cx="11" cy="11" r="4.500" fill="#2e9b43"/><path stroke="#fff" fill="none" d="M9 11l2 2 2-4"/></svg>
      <svg width="16" height="12"><path fill="#fff" d="M0 9h2v3H0zM3 7h2v5H3zM6 5h2v7H6zM9 3h2v9H9zM12 0h3v12h-3z"/></svg>
      <svg width="16" height="14"><path fill="none" stroke="#fff" d="M.5 5h3l4-4v12l-4-4h-3zM10 4q2 3 0 6M12 2q4 5 0 10"/></svg>
      <time class="clock">11:33 AM<br>11/1/2014</time>
    </div>
  </nav>
</section>
</div>
</body>
</html>
```

FILE: styles.css
```css
* { box-sizing: border-box; }
body, h1, h2, h3, p, ul, ol, figure { margin: 0; padding: 0; font-weight: normal; }
ul, ol { list-style: none; }
body {
  font: 11px/16px "Noto Sans", "Open Sans", sans-serif;
  color: #111;
  background: #efefef;
}
button, input, select { font: inherit; color: inherit; margin: 0; padding: 0; border: 0; background: none; border-radius: 0; }
a { color: inherit; text-decoration: none; }
svg { display: block; flex: none; }
.sprite { position: absolute; width: 0; height: 0; }

.desktop { display: flex; min-height: 100vh; }
.monitor { flex: 1 1 0; min-width: 0; height: 100vh; display: flex; flex-direction: column; }

/* Window title */
.titlebar {
  display: flex; align-items: center; height: 23px; flex: none;
  background: #d4ac96; border-bottom: 1px solid #b88f7b; position: relative;
}
.app-icon { width: 16px; height: 16px; margin-left: 2px; }
.title { flex: 1; text-align: center; font: 15px/22px "Open Sans", sans-serif; color: #2c2420; padding-left: 80px; }
.winbtns { display: flex; align-items: flex-start; align-self: flex-start; margin-right: 3px; }
.winbtns button { width: 26px; height: 19px; display: flex; justify-content: center; align-items: flex-start; }
.winbtns .close { width: 45px; align-items: center; background: #bcbcbc; }
.winbtns .close-red { background: #c75050; }

/* Menus and toolbar */
.menubar { display: flex; justify-content: space-between; height: 20px; flex: none; background: #f5f6f7; border-bottom: 1px solid #e8e8e8; }
.menu { display: flex; gap: 16px; padding-left: 8px; line-height: 21px; }
.viewtabs { display: flex; gap: 3px; align-self: flex-end; padding-right: 15px; }
.vt { width: 29px; height: 15px; border: 1px solid #6c6c60; border-bottom: 0; border-radius: 4px 4px 0 0; background: #fff; display: flex; align-items: center; justify-content: center; }
.vt-beige { background: #f0f1ec; }
.vt-blue { background: #e2e8f4; }
.toolbar {
  display: grid; height: 32px; flex: none; align-items: center; justify-items: center;
  grid-template-columns: 28px 24px 30px 4px 28px 6px 28px 6px 34px 22px 10px 14px 22px 10px 30px 8px 14px 22px 30px 22px 26px 10px 32px 2px 30px 6px 98px 16px 16px 20px 12px 12px 22px 12px;
  border-bottom: 1px solid #a0a0a0; background: #efefef;
}
.sep { width: 1px; height: 18px; background: #cfcfcf; }
.caret { width: 0; height: 0; border: 3px solid transparent; border-top: 4px solid #222; border-bottom: 0; }
.caret.off { border-top-color: #bbb; }
.caret.off-dark { border-top-color: #666; }
.abc { color: #c2c2c2; font-weight: bold; font-size: 10px; }
.fit { width: 84px; height: 21px; border: 1px solid #d4d4d4; background: #fff; color: #888; }

/* Sidebar */
.workspace { flex: 1; min-height: 0; display: flex; position: relative; border-right: 1px solid #fff; }
.sidebar { width: 201px; flex: none; display: flex; flex-direction: column; background: #efefef; }
.side-head {
  display: flex; align-items: center; justify-content: space-between; height: 21px; flex: none;
  padding: 0 13px 0 3px; font-weight: bold; font-size: 11px; color: #111;
  background: #dcdcdc; border: solid #a0a0a0; border-width: 1px 0;
}
.side-first { height: 20px; border-top: 0; }
.sheet-list { flex: 1; background: #f8f8f8; }
.sheet-item { display: flex; align-items: center; gap: 6px; padding-left: 12px; height: 17px; }
.objects { background: #f8f8f8; padding: 0 6px 9px; }
.object-grid { display: grid; grid-template-columns: 93px 1fr; border: solid #a0a0a0; border-width: 1px 0; padding: 7px 8px 6px; }
.object-grid li { display: flex; align-items: center; gap: 6px; height: 18px; line-height: 18px; }
.newobj { padding: 5px 10px 0; height: 23px; }
.toggle { display: grid; grid-template-columns: 1fr 1fr; gap: 3px; padding: 0 10px; }
.toggle button { height: 19px; border: 1px solid #a0a0a0; background: #dcdcdc; line-height: 16px; }
.toggle .on { background: #cce4fc; border-color: #3d95ee; }
.layout-tree { height: 220px; padding: 1px 6px; line-height: 18px; background: #efefef; }
.tree-row { display: flex; align-items: center; padding-left: 3px; gap: 8px; }
.tree-row svg + svg { margin-left: 4px; }
.size-form { height: 98px; padding: 6px 9px; }
.size-row { display: flex; align-items: center; height: 21px; margin-bottom: 3px; }
.size-row select { margin-left: auto; width: 151px; height: 20px; border: 1px solid #a9a9a9; background: #fff; padding-left: 0; }
.dims label { width: 12px; }
.dims .h { margin-left: auto; width: 10px; }
.spin { display: flex; width: 51px; height: 20px; border: 1px solid #a9a9a9; background: #fff; padding: 1px; }
.spin input { flex: 1; min-width: 0; padding-left: 3px; }
.steps { width: 14px; display: grid; grid-template-rows: 1fr 1fr; }
.steps button { border: 1px solid #bbb; background: #eee; font-size: 8px; line-height: 5px; overflow: hidden; }
.check { display: flex; align-items: center; gap: 5px; margin-top: 20px; height: 20px; }
.check input { appearance: none; width: 13px; height: 13px; border: 1px solid #555; background: #fff; }

/* Canvas */
.main { flex: 1; min-width: 0; display: flex; flex-direction: column; border-left: 2px solid #808080; border-top: 1px solid #6b6b6b; }
.canvas { flex: 1; min-height: 0; background: #e6e6e6; }
.dash { width: 999px; height: 800px; background: #fff; display: flex; flex-direction: column; color: #555; }
.dash-title { font: bold 24px/30px "Liberation Sans", Arial, sans-serif; text-align: center; padding-top: 18px; color: #555; }
.sheet-title { font: bold 15px/20px "Noto Sans", sans-serif; padding: 18px 0 9px 7px; color: #555; }

.chart {
  display: grid; font: 11px/16px "Liberation Sans", Arial, sans-serif; color: #555;
  grid-template-rows: 18px 1fr 20px;
}
.chart-left { --max: 11330; --bar: #1f77b4; flex: 1; grid-template-columns: 22px 30px 1fr; padding: 0 9px 9px 0; }
.chart-right { --max: 13310; --bar: #1876b6; height: 100%; grid-template-columns: 20px 30px 1fr; padding: 7px 4px 5px 0; }
.chart figcaption { grid-area: 1 / 3; text-align: center; }
.ytitle { grid-area: 2 / 1; writing-mode: vertical-rl; transform: rotate(180deg); text-align: center; justify-self: end; }
.yaxis { grid-area: 2 / 2; position: relative; font-weight: bold; }
.yaxis li { position: absolute; right: 0; bottom: calc(var(--v) * 100% / var(--max)); padding-right: 7px; margin-bottom: -7px; line-height: 14px; }
.yaxis li::after { content: ""; position: absolute; right: 0; top: 7px; width: 5px; height: 1px; background: #d4d4d4; }
.yaxis .zero { margin-bottom: 0; }
.yaxis .zero::after { top: auto; bottom: 0; }
.plot { grid-area: 2 / 3; border: 1px solid #d4d4d4; display: flex; align-items: flex-end; }
.plot i { flex: 1; height: 100%; background: linear-gradient(var(--bar), var(--bar)) bottom / 75% calc(var(--v) * 100% / var(--max)) no-repeat; }
.xaxis { grid-area: 3 / 3; display: flex; font-weight: bold; line-height: 20px; border-right: 1px solid transparent; }
.xaxis li { flex: 1; text-align: center; background: linear-gradient(#d4d4d4, #d4d4d4) left top / 1px 4px no-repeat; }

.sheet-tabs { display: flex; align-items: flex-start; height: 31px; flex: none; padding-left: 1px; border-top: 1px solid #a0a0a0; background: #efefef; }
.st { height: 26px; border: 1px solid #a0a0a0; border-top: 0; border-radius: 0 0 7px 7px; display: flex; align-items: center; justify-content: center; margin-right: 3px; }
.st-sheet { width: 71px; }
.st-active { width: 113px; gap: 8px; background: #fff; font-weight: bold; margin-right: 7px; border-color: #b5b5b5; }
.st-add { width: 32px; background: #e6e6e6; }

/* Show Me palette floats over the canvas */
.showme { position: absolute; right: 15px; top: -25px; width: 168px; height: 412px; background: #fff; border: 1px solid #999; border-radius: 5px 5px 0 0; box-shadow: 2px 3px 4px #0004; }
.showme-head { display: flex; align-items: center; gap: 7px; height: 23px; background: #deebf6; border-bottom: 1px solid #bbb; border-radius: 4px 4px 0 0; font-size: 12px; }
.grip { margin: 0 21px 0 4px; }
.thumbs { display: grid; grid-template-columns: repeat(3, 42px); gap: 6px 11px; padding: 6px 9px; }
.thumbs svg { width: 42px; height: 28px; border: 1px solid #e0e0e0; }
.mono { font: 21px "Liberation Mono", monospace; fill: #888; }
.mono.small { font-size: 13px; }
.select-view { font: bold 12px/17px "Open Sans", sans-serif; padding-left: 7px; padding-top: 2px; }

.status { height: 19px; flex: none; border-top: 1px solid #8c8c8c; background: #efefef; display: flex; align-items: center; justify-content: flex-end; padding-right: 8px; }

/* Taskbars */
.taskbar { height: 40px; flex: none; display: flex; gap: 4px; position: relative; background: #695e56; color: #fff; }
.taskbar-right { background: linear-gradient(90deg, #84786f, #74665d 20%, #64534b 40%, #75685e 50%, #655750 62%); }
.wallpaper { position: absolute; inset: 0; width: 100%; height: 100%; }
.taskbar > * { flex: none; }
.start { width: 48px; display: flex; align-items: center; justify-content: center; position: relative; }
.tk { width: 58px; height: 38px; margin-top: 1px; display: flex; align-items: center; justify-content: center; position: relative; border: 1px solid transparent; white-space: nowrap; }
.tk.wide { width: 158px; justify-content: flex-start; padding-left: 9px; gap: 6px; }
.tk.open { background: #ffffff26; border-color: #ffffff59; }
.tk.current { background: #ffffff59; border-color: #f2eeea; }
.tray { margin-left: auto; display: flex; align-items: center; gap: 10px; position: relative; padding-right: 17px; }
.ac { position: relative; width: 55px; height: 24px; margin-right: 6px; background: #000; border: 1px solid #fff; text-align: center; font-size: 12px; line-height: 22px; }
.ac::after { content: ""; position: absolute; right: -4px; top: 5px; width: 3px; height: 12px; background: #fff; }
.clock { text-align: center; line-height: 17px; margin-left: 9px; }

/* Browser frame */
.tabstrip { height: 25px; flex: none; position: relative; display: flex; justify-content: space-between; background: linear-gradient(#a4a4a4, #a4a4a4) bottom / 100% 1px no-repeat #ebebeb; }
.tabshape { position: absolute; left: 0; top: 0; }
.newtab { position: absolute; left: 204px; top: 5px; }
.tab { position: relative; display: flex; align-items: center; width: 200px; padding-left: 17px; gap: 6px; }
.tabname { flex: none; width: 140px; overflow: hidden; white-space: nowrap; }
.tabstrip .winbtns { position: relative; }
.chrome-ui { height: 60px; flex: none; background: linear-gradient(#fbfbfb, #ececec 45%, #dcdcdc); border-bottom: 1px solid #a4a4a4; }
.navrow { display: flex; align-items: center; height: 35px; padding: 0 4px 0 3px; }
.nb { width: 29px; display: flex; justify-content: center; }
.omni { flex: 1; height: 28px; margin: 0 11px 0 5px; padding: 0 3px 0 6px; display: flex; align-items: center; gap: 7px; background: #fff; border: 1px solid #b4b4b4; border-radius: 3px; }
.url { font: 15px/20px "Open Sans", sans-serif; color: #111; }
.url span { color: #888; }
.star { margin-left: auto; }
.ext { display: flex; align-items: center; gap: 12px; }
.bookmarks { display: flex; gap: 12px; padding: 1px 6px; }
.bookmarks a { display: flex; align-items: center; gap: 5px; height: 19px; white-space: nowrap; }
.xda { width: 16px; height: 16px; background: #fff; color: #ef9a3d; font-size: 8px; line-height: 16px; text-align: center; }

/* Course page */
.viewport { flex: 1; min-height: 0; display: flex; background: #fff; }
.page { flex: 1; overflow: hidden; position: relative; }
.content { margin-left: 402px; max-width: 764px; font-family: "Open Sans", sans-serif; color: #333; }
.h-one { font-weight: 300; font-size: 33px; line-height: 40px; padding-top: 4px; }
.h-two { font-weight: 300; font-size: 26px; line-height: 32px; margin-top: 22px; }
.lead { font: 17px/22px "Liberation Sans", Arial, sans-serif; color: #6e7078; margin-top: 14px; }
.h-three { font-weight: 300; font-size: 21px; line-height: 30px; margin-top: 20px; }
.h-b { margin-top: 41px; }
.frame { border: 1px solid #c4c4c4; background: #f8f8f8; padding: 6px; }
.frame-a { width: 739px; height: 438px; margin-top: 12px; }
.shot-a { height: 100%; background: #fff; border: solid #e6e6e6; border-width: 1px 9px 5px 3px; }
.frame-b { height: 300px; margin-top: 11px; }
.shot-b { height: 100%; background: #fff; border: 5px solid #e6e6e6; padding: 10px 3px 0; }
.gantt { width: 100%; border-collapse: collapse; table-layout: fixed; font: bold 11px/14px "Liberation Sans", Arial, sans-serif; color: #555; }
.gantt th { width: 72px; text-align: right; padding: 0 5px 0 0; height: 18px; border-right: 1px solid #d4d4d4; }
.gantt td { padding: 0; border-right: 1px solid #d4d4d4; }
.gantt thead th { border: 0; font-weight: normal; font-size: 10px; height: 12px; line-height: 10px; white-space: nowrap; }
.gantt thead td { border: 0; }
.gantt thead { border-bottom: 1px solid #d4d4d4; }
.gantt td svg { width: 100%; height: 14px; stroke: #1876b6; stroke-width: 14; }
.totop { position: absolute; right: 32px; bottom: 48px; width: 32px; height: 31px; border-radius: 5px; background: #8f9699; display: flex; align-items: center; justify-content: center; }
.scrollbar { width: 17px; flex: none; background: #f1f1f1; display: flex; flex-direction: column; align-items: center; padding: 6px 1px; }
.scrollbar i { width: 100%; height: 235px; background: #c1c1c1; margin: 160px 0 auto; }

.downloads { height: 43px; flex: none; background: #dedede; border-top: 1px solid #cfcfcf; display: flex; align-items: center; justify-content: space-between; padding: 0 15px 0 4px; }
.dl { display: flex; width: 205px; height: 35px; border: 1px solid #a6a6a6; border-radius: 2px; background: #ebebeb; }
.dl-file { flex: 1; display: flex; align-items: center; gap: 11px; padding-left: 8px; }
.dl-more { width: 14px; border-left: 1px solid #bbb; display: flex; align-items: center; justify-content: center; padding-bottom: 7px; }
.dl-right { display: flex; align-items: center; gap: 8px; }
.dl-right a { text-decoration: underline; }
.dl-right button { margin-left: 12px; }
```
